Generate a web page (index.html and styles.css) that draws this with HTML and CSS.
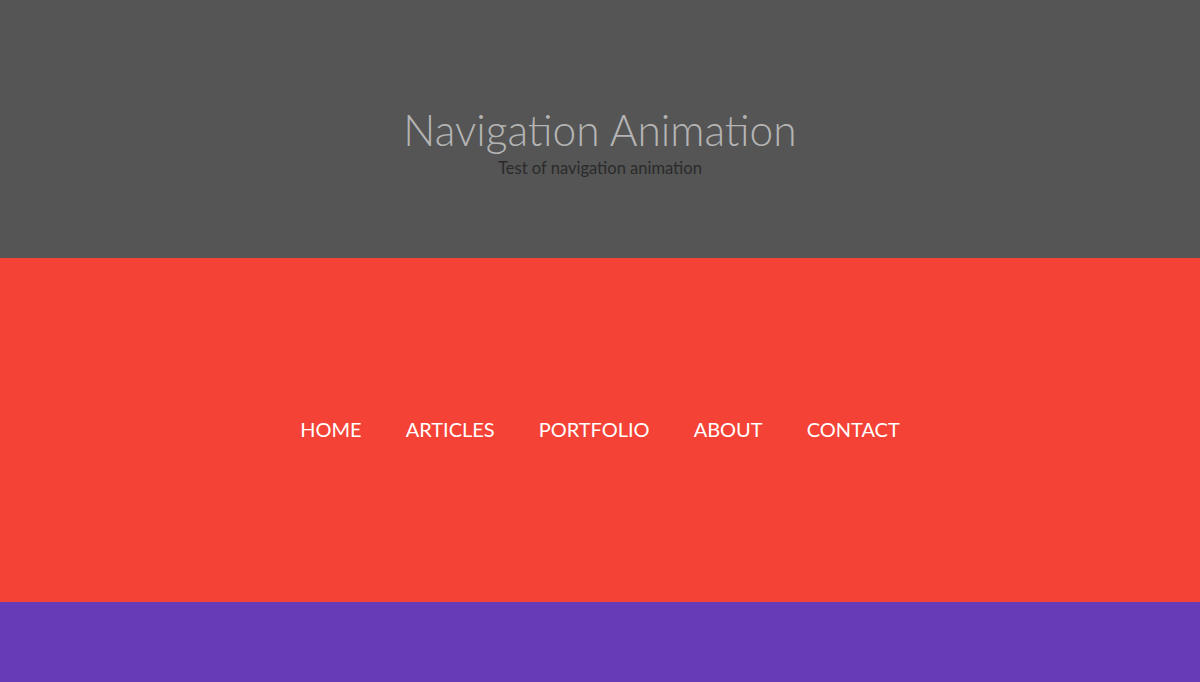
FILE: index.html
```html
<!DOCTYPE html>
<html lang="en">
<head>
<meta charset="utf-8">
<title>Navigation Animation</title>
<link rel="stylesheet" href="styles.css">
</head>
<body>
<header class="hero">
  <h1 class="hero-title">Navigation Animation</h1>
  <p class="hero-sub">Test of navigation animation</p>
</header>
<section class="nav-section">
  <nav class="nav">
    <a class="nav-link" href="#">HOME</a>
    <a class="nav-link" href="#">ARTICLES</a>
    <a class="nav-link" href="#">PORTFOLIO</a>
    <a class="nav-link" href="#">ABOUT</a>
    <a class="nav-link" href="#">CONTACT</a>
  </nav>
</section>
<section class="purple"></section>
</body>
</html>
```
FILE: styles.css
```css
html, body {
  margin: 0;
  padding: 0;
}
body {
  font-family: "Lato", "Open Sans", sans-serif;
}
.hero {
  height: 258px;
  background: #555555;
  display: flex;
  flex-direction: column;
  align-items: center;
  justify-content: center;
  padding-top: 27px;
  box-sizing: border-box;
}
.hero-title {
  margin: 0;
  font-weight: 300;
  font-size: 42.5px;
  line-height: 48px;
  color: #b4b4b4;
}
.hero-sub {
  margin: 3px 0 0;
  font-weight: 400;
  font-size: 16.5px;
  line-height: 22px;
  color: #2a2a2a;
}
.nav-section {
  height: 344px;
  background: #f44336;
  display: flex;
  align-items: center;
  justify-content: center;
}
.nav {
  display: flex;
  gap: 44px;
}
.nav-link {
  color: #ffffff;
  text-decoration: none;
  font-size: 20px;
  line-height: 24px;
  padding-bottom: 2px;
}
.purple {
  height: 80px;
  background: #673ab7;
}
```
